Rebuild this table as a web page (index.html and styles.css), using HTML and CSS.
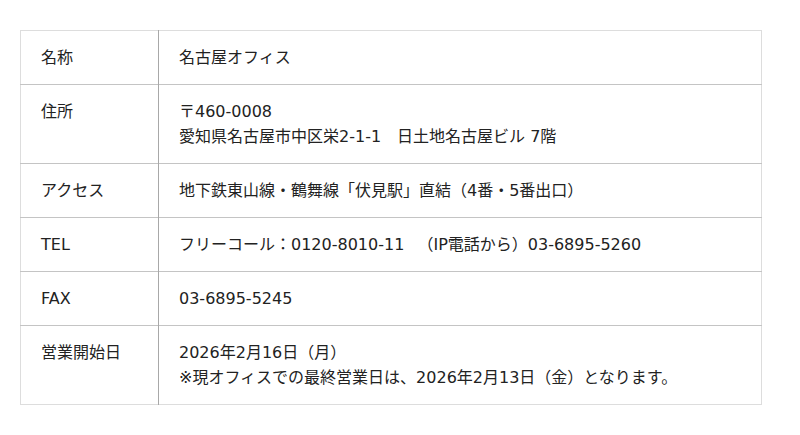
FILE: index.html
```html
<!DOCTYPE html>
<html lang="ja">
<head>
<meta charset="utf-8">
<link rel="stylesheet" href="styles.css">
</head>
<body>
<div class="wrap">
<table class="info">
  <tbody>
    <tr><th>名称</th><td>名古屋オフィス</td></tr>
    <tr><th>住所</th><td>〒460-0008<br>愛知県名古屋市中区栄2-1-1　日土地名古屋ビル 7階</td></tr>
    <tr><th>アクセス</th><td>地下鉄東山線・鶴舞線「伏見駅」直結（4番・5番出口）</td></tr>
    <tr><th>TEL</th><td>フリーコール：0120-8010-11 　（IP電話から）03-6895-5260</td></tr>
    <tr><th>FAX</th><td>03-6895-5245</td></tr>
    <tr><th>営業開始日</th><td>2026年2月16日（月）<br>※現オフィスでの最終営業日は、2026年2月13日（金）となります。</td></tr>
  </tbody>
</table>
</div>
</body>
</html>
```
FILE: styles.css
```css
html, body {
  margin: 0;
  padding: 0;
  background: #fff;
}
.wrap {
  padding: 30px 38px 0 20px;
}
.info {
  width: 742px;
  border-collapse: collapse;
  border: 1px solid #dddddd;
  font-family: "DejaVu Sans", "Noto Sans CJK JP", sans-serif;
  font-size: 16px;
  line-height: 25px;
  color: #222;
}
.info tr {
  border-bottom: 1px solid #c4c4c4;
}
.info tr:last-child {
  border-bottom: 1px solid #dddddd;
}
.info th {
  width: 97px;
  text-align: left;
  font-weight: normal;
  vertical-align: top;
  padding: 14px 20px;
  border-right: 1px solid #a8a8a8;
}
.info td {
  vertical-align: top;
  padding: 14px 20px;
}
```
